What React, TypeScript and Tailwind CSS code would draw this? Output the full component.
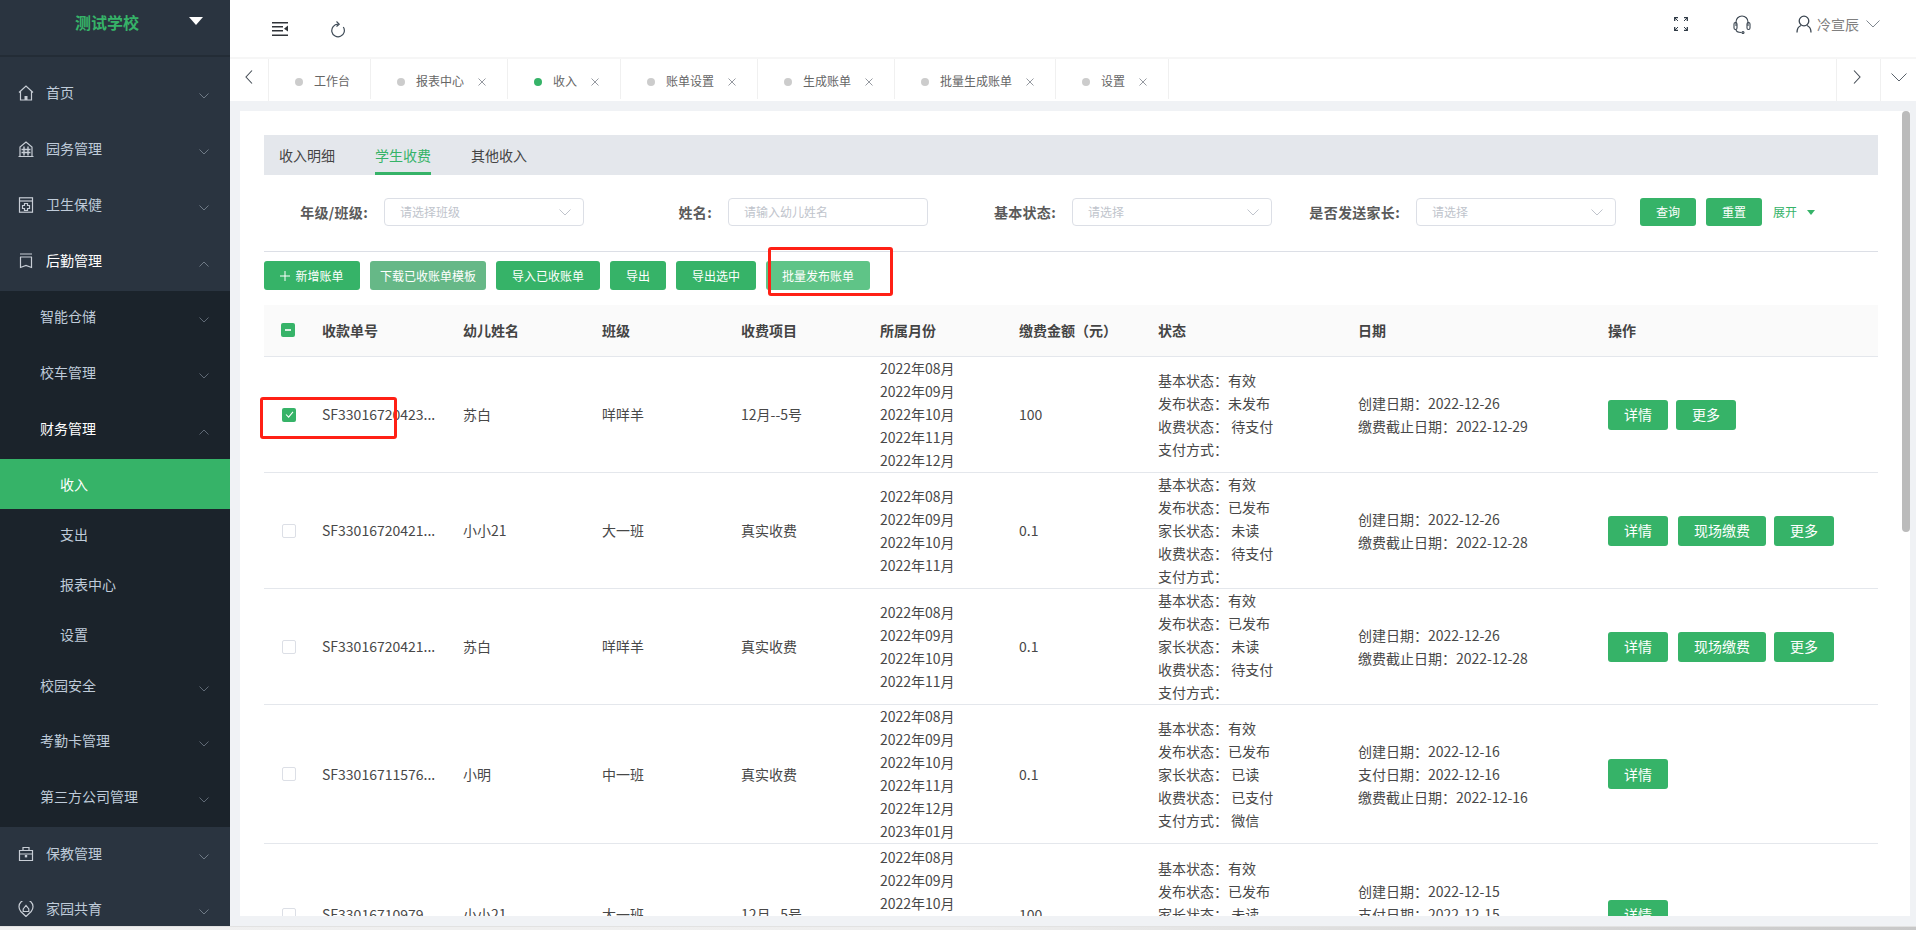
import React from "react";

const Chev = ({ up = false, className = "" }: { up?: boolean; className?: string }) => (
  <svg viewBox="0 0 10 6" className={`w-[10px] h-[6px] ${className}`} fill="none" stroke="currentColor" strokeWidth="1">
    <polyline points={up ? "0.5,5.5 5,1 9.5,5.5" : "0.5,0.5 5,5 9.5,0.5"} />
  </svg>
);

const ic = { fill: "none", stroke: "#c8ced6", strokeWidth: 1.2 };
const IconHome = () => (
  <svg viewBox="0 0 16 16" className="w-[16px] h-[16px]" {...ic}>
    <path d="M1 7.5 8 1l7 6.500M2.500 6.500V15h11V6.500" />
    <rect x="6.500" y="11" width="3" height="4" fill="#c8ced6" stroke="none" />
  </svg>
);
const IconBuilding = () => (
  <svg viewBox="0 0 16 16" className="w-[16px] h-[16px]" {...ic}>
    <path d="M0.500 15.500h15M2 15.500V6l6-5 6 5v9.500" />
    <path d="M6 5.500v9M10 5.500v9M3.500 8.500h9M3.500 11.500h9" strokeWidth="1.400" />
  </svg>
);
const IconClinic = () => (
  <svg viewBox="0 0 16 16" className="w-[16px] h-[16px]" {...ic}>
    <rect x="1.500" y="0.800" width="13" height="14.400" />
    <path d="M1.500 4h13" />
    <path d="M6.500 6.500h3v2h2v3h-2v2h-3v-2h-2v-3h2z" />
  </svg>
);
const IconBook = () => (
  <svg viewBox="0 0 16 16" className="w-[16px] h-[16px]" {...ic}>
    <path d="M2 1h12M2 4h12" />
    <path d="M2.500 4v10.500L8 12.500l5.500 2V4" />
  </svg>
);
const IconCase = () => (
  <svg viewBox="0 0 16 16" className="w-[16px] h-[16px]" {...ic}>
    <path d="M1.500 4.500h13v10h-13zM5 4.500V1.500h6v3M1.500 8h13" />
    <rect x="6.800" y="9" width="2.400" height="2.400" fill="#c8ced6" stroke="none" />
  </svg>
);
const IconPin = () => (
  <svg viewBox="0 0 16 16" className="w-[16px] h-[16px]" {...ic}>
    <path d="M8 15.500 2.800 10.500a7 7 0 1 1 10.400 0z" />
    <path d="M5.200 8 8 4.500 10.800 8v2.500H5.200z" />
  </svg>
);

type TopProps = { icon: React.ReactNode; label: string; up?: boolean; bright?: boolean; cls: string };
const TopItem = ({ icon, label, up, bright, cls }: TopProps) => (
  <div className={`flex items-center pl-[18px] pr-[21px] ${cls}`}>
    <span className="w-[28px] flex-none -mt-[1px]">{icon}</span>
    <span className={`flex-1 text-[14px] -mt-[2px] ${bright ? "text-white" : "text-[#bfcbd9]"}`}>{label}</span>
    <Chev up={up} className="text-[#6f7a86] mt-[5px]" />
  </div>
);
const SubItem = ({ label, up, bright, cls }: { label: string; up?: boolean; bright?: boolean; cls: string }) => (
  <div className={`flex items-center pl-[40px] pr-[21px] ${cls}`}>
    <span className={`flex-1 text-[14px] -mt-[2px] ${bright ? "text-white" : "text-[#bfcbd9]"}`}>{label}</span>
    <Chev up={up} className="text-[#5f6975] mt-[5px]" />
  </div>
);
const LeafItem = ({ label }: { label: string }) => (
  <div className="h-[50px] flex items-center pl-[60px] text-[14px] text-[#bfcbd9]">{label}</div>
);

const Sidebar = () => (
  <aside className="w-[230px] flex-none bg-[#2a3440] overflow-hidden flex flex-col">
    <div className="h-[57px] flex-none flex items-center border-b-2 border-[#232c36] relative">
      <span className="ml-[75px] text-[16px] font-bold text-[#36b368] mb-[11px]">测试学校</span>
      <svg viewBox="0 0 14 8" className="w-[14px] h-[8px] ml-[50px] mb-[13px]"><path d="M0 0h14L7 8z" fill="#fff" /></svg>
    </div>
    <div className="h-[8px] flex-none" />
    <TopItem icon={<IconHome />} label="首页" cls="h-[56px] flex-none" />
    <TopItem icon={<IconBuilding />} label="园务管理" cls="h-[56px] flex-none" />
    <TopItem icon={<IconClinic />} label="卫生保健" cls="h-[56px] flex-none" />
    <TopItem icon={<IconBook />} label="后勤管理" up bright cls="h-[56px] flex-none" />
    <div className="flex-none mt-[2px] bg-[#1b232b] pb-[2px]">
      <SubItem label="智能仓储" cls="h-[54px] pb-[2px]" />
      <SubItem label="校车管理" cls="h-[56px]" />
      <SubItem label="财务管理" up bright cls="h-[56px]" />
      <div className="mt-[2px] h-[50px] bg-[#36b368] flex items-center pl-[60px] text-[14px] text-white">收入</div>
      <LeafItem label="支出" />
      <LeafItem label="报表中心" />
      <LeafItem label="设置" />
      <SubItem label="校园安全" cls="h-[54px]" />
      <SubItem label="考勤卡管理" cls="h-[56px]" />
      <SubItem label="第三方公司管理" cls="h-[56px]" />
    </div>
    <TopItem icon={<IconCase />} label="保教管理" cls="h-[54px] flex-none" />
    <TopItem icon={<IconPin />} label="家园共育" cls="h-[56px] flex-none" />
  </aside>
);

const Header = () => (
  <header className="h-[57px] flex-none flex items-center bg-white relative">
    <div className="flex items-center ml-[42px] mt-[1px]">
      <svg viewBox="0 0 16 14" className="w-[16px] h-[14px]" fill="#2f3338">
        <rect x="0" y="0" width="16" height="1.500" />
        <rect x="0" y="4" width="11" height="1.500" />
        <rect x="0" y="8" width="11" height="1.500" />
        <rect x="0" y="12.500" width="16" height="1.500" />
        <path d="M16 3.500v6L12 6.750z" />
      </svg>
      <svg viewBox="0 0 16 17" className="w-[16px] h-[17px] ml-[42px]" fill="none" stroke="#3f4b57" strokeWidth="1.200">
        <path d="M8 3.200A6.300 6.300 0 1 0 13.300 6" />
        <path d="M6.500 0.500 9.200 3.200 6.500 5.500" />
      </svg>
    </div>
    <div className="ml-auto flex items-center mb-[9px] mr-[36px]">
      <svg viewBox="0 0 14 14" className="w-[14px] h-[14px]" fill="none" stroke="#2f3a45" strokeWidth="1.300">
        <path d="M0.700 4V0.700H4M13.300 4V0.700H10M0.700 10V13.300H4M13.300 10V13.300H10" />
        <path d="M1 1l3 3M13 1l-3 3M1 13l3-3M13 13l-3-3" strokeWidth="1" />
      </svg>
      <svg viewBox="0 0 18 20" className="w-[18px] h-[20px] ml-[45px]" fill="none" stroke="#3a4550" strokeWidth="1.100">
        <path d="M3 12V8a6 6 0 0 1 12 0v4" />
        <rect x="1" y="8.500" width="3" height="7" rx="1.500" />
        <rect x="14" y="8.500" width="3" height="7" rx="1.500" />
        <path d="M3 15.500c0 2 2 3 5.500 3" />
        <circle cx="10" cy="18.500" r="1" />
      </svg>
      <svg viewBox="0 0 16 18" className="w-[16px] h-[18px] ml-[45px]" fill="none" stroke="#3a4550" strokeWidth="1.300">
        <circle cx="8" cy="6" r="4.800" />
        <path d="M1 17.500c0-4 1.500-6 4-7M15 17.500c0-4-1.500-6-4-7" />
      </svg>
      <span className="ml-[5px] text-[14px] text-[#808080]">冷宣辰</span>
      <svg viewBox="0 0 14 8" className="w-[14px] h-[8px] ml-[7px]" fill="none" stroke="#808890" strokeWidth="1">
        <polyline points="0.500,0.500 7,7 13.500,0.500" />
      </svg>
    </div>
  </header>
);

const Tab = ({ label, active, close = true, cls }: { label: string; active?: boolean; close?: boolean; cls: string }) => (
  <div className={`h-[40px] flex items-center pt-[6px] pl-[26px] border-r border-[#f0f0f0] flex-none ${cls}`}>
    <span className={`w-[8px] h-[8px] rounded-full flex-none ${active ? "bg-[#36b368]" : "bg-[#cccccc]"}`} />
    <span className="ml-[11px] -mt-[2px] text-[12px] text-[#666666]">{label}</span>
    {close && (
      <svg viewBox="0 0 8 8" className="w-[8px] h-[8px] ml-[14px]" fill="none" stroke="#8a8f96" strokeWidth="0.900">
        <path d="M0.500 0.500 7.500 7.500M7.500 0.500 0.500 7.500" />
      </svg>
    )}
  </div>
);

const Tabs = () => (
  <div className="h-[44px] flex-none bg-white flex border-t-2 border-[#f6f6f6] shadow-none">
    <div className="w-[39px] h-[42px] flex items-center justify-center border-r border-[#f0f0f0] pb-[6px]">
      <svg viewBox="0 0 8 14" className="w-[8px] h-[14px]" fill="none" stroke="#444c55" strokeWidth="1.100"><polyline points="7,0.500 1,7 7,13.500" /></svg>
    </div>
    <Tab label="工作台" close={false} cls="w-[102px]" />
    <Tab label="报表中心" cls="w-[137px]" />
    <Tab label="收入" active cls="w-[113px]" />
    <Tab label="账单设置" cls="w-[137px]" />
    <Tab label="生成账单" cls="w-[137px]" />
    <Tab label="批量生成账单" cls="w-[161px]" />
    <Tab label="设置" cls="w-[113px]" />
    <div className="ml-auto w-[44px] h-[42px] flex items-center justify-center border-l border-[#f0f0f0] pb-[6px] pr-[4px]">
      <svg viewBox="0 0 8 14" className="w-[8px] h-[14px]" fill="none" stroke="#444c55" strokeWidth="1.100"><polyline points="1,0.500 7,7 1,13.500" /></svg>
    </div>
    <div className="w-[36px] h-[42px] flex items-center justify-center border-l border-[#f0f0f0] pb-[6px]">
      <svg viewBox="0 0 16 9" className="w-[16px] h-[9px]" fill="none" stroke="#5a626b" strokeWidth="1"><polyline points="0.500,0.500 8,8 15.500,0.500" /></svg>
    </div>
  </div>
);

const Field = ({ label, placeholder, arrow = true, cls }: { label: string; placeholder: string; arrow?: boolean; cls: string }) => (
  <div className="flex items-center flex-none">
    <label className={`text-right text-[14px] font-bold text-[#5a5a5a] tracking-[0.3px] ${cls}`}>{label}</label>
    <div className="ml-[16px] w-[200px] h-[28px] rounded-[4px] border border-[#dcdfe6] bg-white flex items-center pl-[15px] pr-[12px] justify-between">
      <span className="text-[12px] text-[#c0c4cc]">{placeholder}</span>
      {arrow && (
        <svg viewBox="0 0 12 7" className="w-[12px] h-[7px]" fill="none" stroke="#c0c4cc" strokeWidth="1"><polyline points="0.500,0.500 6,6 11.500,0.500" /></svg>
      )}
    </div>
  </div>
);

const Filter = () => (
  <div className="flex items-center mt-[23px] h-[28px]">
    <Field label="年级/班级:" placeholder="请选择班级" cls="w-[104px]" />
    <Field label="姓名:" placeholder="请输入幼儿姓名" arrow={false} cls="w-[128px]" />
    <Field label="基本状态:" placeholder="请选择" cls="w-[128px]" />
    <Field label="是否发送家长:" placeholder="请选择" cls="w-[128px]" />
    <button className="ml-[24px] w-[56px] h-[28px] rounded-[3px] bg-[#36b368] text-white text-[12px]">查询</button>
    <button className="ml-[10px] w-[56px] h-[28px] rounded-[3px] bg-[#36b368] text-white text-[12px]">重置</button>
    <span className="ml-[11px] text-[12px] text-[#36b368]">展开</span>
    <svg viewBox="0 0 8 5" className="w-[8px] h-[5px] ml-[10px]"><path d="M0 0h8L4 5z" fill="#36b368" /></svg>
  </div>
);

const ActionBtn = ({ children, cls }: { children: React.ReactNode; cls: string }) => (
  <button className={`h-[29px] rounded-[3px] text-white text-[12px] flex items-center justify-center ${cls}`}>{children}</button>
);

const Actions = () => (
  <div className="flex mt-[9px] gap-[10px]">
    <ActionBtn cls="w-[96px] bg-[#36b368] gap-[5px]">
      <svg viewBox="0 0 10 10" className="w-[10px] h-[10px]" fill="none" stroke="#fff" strokeWidth="1"><path d="M5 0v10M0 5h10" /></svg>
      新增账单
    </ActionBtn>
    <ActionBtn cls="w-[116px] bg-[#66b887]">下载已收账单模板</ActionBtn>
    <ActionBtn cls="w-[104px] bg-[#36b368]">导入已收账单</ActionBtn>
    <ActionBtn cls="w-[56px] bg-[#36b368]">导出</ActionBtn>
    <ActionBtn cls="w-[80px] bg-[#36b368]">导出选中</ActionBtn>
    <ActionBtn cls="w-[104px] bg-[#5fc487]">批量发布账单</ActionBtn>
  </div>
);

const gridCols = "grid grid-cols-[58px_141px_139px_139px_139px_139px_139px_200px_250px_270px] items-center";

const Check = ({ state }: { state?: "on" }) =>
  state === "on" ? (
    <span className="ml-[18px] w-[14px] h-[14px] rounded-[2px] bg-[#36b368] flex items-center justify-center">
      <svg viewBox="0 0 10 8" className="w-[9px] h-[7px]" fill="none" stroke="#fff" strokeWidth="1.200"><polyline points="1,4 4,7 9,1" /></svg>
    </span>
  ) : (
    <span className="ml-[18px] block w-[14px] h-[14px] rounded-[2px] border border-[#dcdfe6] bg-white" />
  );

const OpBtn = ({ label, cls }: { label: string; cls: string }) => (
  <button className={`h-[30px] rounded-[3px] bg-[#36b368] text-white text-[14px] flex-none ${cls}`}>{label}</button>
);

type Row = {
  id: string; name: string; cls: string; item: string; months: string[]; amount: string;
  status: [string, string][]; dates: string[]; ops: number; h: string; checked?: boolean;
};

const m4 = ["2022年08月", "2022年09月", "2022年10月", "2022年11月"];
const m5 = [...m4, "2022年12月"];
const m6 = [...m5, "2023年01月"];

const rows: Row[] = [
  { id: "SF33016720423...", name: "苏白", cls: "咩咩羊", item: "12月--5号", months: m5, amount: "100", h: "h-[116px]", ops: 1, checked: true,
    status: [["基本状态：", "有效"], ["发布状态：", "未发布"], ["收费状态： ", "待支付"], ["支付方式：", ""]],
    dates: ["创建日期：2022-12-26", "缴费截止日期：2022-12-29"] },
  { id: "SF33016720421...", name: "小小21", cls: "大一班", item: "真实收费", months: m4, amount: "0.1", h: "h-[116px]", ops: 2,
    status: [["基本状态：", "有效"], ["发布状态：", "已发布"], ["家长状态： ", "未读"], ["收费状态： ", "待支付"], ["支付方式：", ""]],
    dates: ["创建日期：2022-12-26", "缴费截止日期：2022-12-28"] },
  { id: "SF33016720421...", name: "苏白", cls: "咩咩羊", item: "真实收费", months: m4, amount: "0.1", h: "h-[116px]", ops: 2,
    status: [["基本状态：", "有效"], ["发布状态：", "已发布"], ["家长状态： ", "未读"], ["收费状态： ", "待支付"], ["支付方式：", ""]],
    dates: ["创建日期：2022-12-26", "缴费截止日期：2022-12-28"] },
  { id: "SF33016711576...", name: "小明", cls: "中一班", item: "真实收费", months: m6, amount: "0.1", h: "h-[139px]", ops: 0,
    status: [["基本状态：", "有效"], ["发布状态：", "已发布"], ["家长状态： ", "已读"], ["收费状态： ", "已支付"], ["支付方式： ", "微信"]],
    dates: ["创建日期：2022-12-16", "支付日期：2022-12-16", "缴费截止日期：2022-12-16"] },
  { id: "SF33016710979...", name: "小小21", cls: "大一班", item: "12月--5号", months: m6, amount: "100", h: "h-[142px]", ops: 0,
    status: [["基本状态：", "有效"], ["发布状态：", "已发布"], ["家长状态： ", "未读"], ["收费状态： ", "待支付"], ["支付方式：", ""]],
    dates: ["创建日期：2022-12-15", "支付日期：2022-12-15", "缴费截止日期：2022-12-18"] },
];

const headers = ["收款单号", "幼儿姓名", "班级", "收费项目", "所属月份", "缴费金额（元）", "状态", "日期", "操作"];

const Table = () => (
  <div className="mt-[15px] text-[14px] leading-[23px] text-[#484848]">
    <div className={`${gridCols} h-[52px] pb-[1px] bg-[#fafafa] border-b border-[#e4e7ec]`}>
      <span className="ml-[17px] w-[14px] h-[14px] rounded-[2px] bg-[#36b368] flex items-center justify-center">
        <span className="w-[6px] h-[2px] bg-white/80" />
      </span>
      {headers.map((h) => (
        <span key={h} className="font-bold text-[#444444]">{h}</span>
      ))}
    </div>
    {rows.map((r, i) => (
      <div key={i} className={`${gridCols} ${r.h} border-b border-[#e4e7ec]`}>
        <Check state={r.checked ? "on" : undefined} />
        <span className="whitespace-nowrap">{r.id}</span>
        <span>{r.name}</span>
        <span>{r.cls}</span>
        <span>{r.item}</span>
        <div>{r.months.map((m) => <div key={m}>{m}</div>)}</div>
        <span>{r.amount}</span>
        <div>
          {r.status.map(([a, b]) => (
            <div key={a} className="whitespace-pre">{a}{b}</div>
          ))}
        </div>
        <div>{r.dates.map((d) => <div key={d}>{d}</div>)}</div>
        <div className="flex">
          <OpBtn label="详情" cls="w-[60px]" />
          {r.ops === 1 && <OpBtn label="更多" cls="w-[60px] ml-[8px]" />}
          {r.ops === 2 && <OpBtn label="现场缴费" cls="w-[88px] ml-[10px]" />}
          {r.ops === 2 && <OpBtn label="更多" cls="w-[60px] ml-[8px]" />}
        </div>
      </div>
    ))}
  </div>
);

const Content = () => (
  <div className="flex-1 min-h-0 bg-[#f0f2f5] pt-[10px] pb-[10px] pl-[10px] pr-[6px] flex">
    <div className="flex-1 bg-white overflow-hidden pl-[24px] pr-[32px] pt-[24px]">
      <div className="h-[40px] bg-[#e4e7ec] flex text-[14px] text-[#444444] pl-[15px] gap-[40px]">
        <span className="h-[40px] leading-[40px]">收入明细</span>
        <span className="h-[40px] leading-[40px] text-[#36b368] border-b-[3px] border-[#36b368]">学生收费</span>
        <span className="h-[40px] leading-[40px]">其他收入</span>
      </div>
      <Filter />
      <div className="mt-[25px] h-px bg-[#dcdfe6]" />
      <Actions />
      <Table />
    </div>
  </div>
);

export default function App() {
  return (
    <div className="w-[1916px] h-[930px] relative overflow-hidden flex flex-col font-['Noto_Sans_CJK_SC','Liberation_Sans',sans-serif] bg-[#f0f2f5]">
      <div className="h-[926px] flex-none flex">
        <Sidebar />
        <main className="flex-1 min-w-0 flex flex-col">
          <Header />
          <Tabs />
          <Content />
        </main>
      </div>
      <div className="h-[4px] flex-none border-t border-[#e2e2e2] bg-gradient-to-r from-[#f0f0f0] via-[#eeeeee] to-[#c8c8c8]" />

      <div className="absolute left-[1902px] top-[111px] w-[8px] h-[421px] rounded-[4px] bg-[#bbbbbb]" />
      <div className="absolute left-[768px] top-[247px] w-[125px] h-[49px] border-[3px] border-[#ff2015] rounded-[3px]" />
      <div className="absolute left-[260px] top-[397px] w-[137px] h-[42px] border-[3px] border-[#ff2015] rounded-[3px]" />
    </div>
  );
}
